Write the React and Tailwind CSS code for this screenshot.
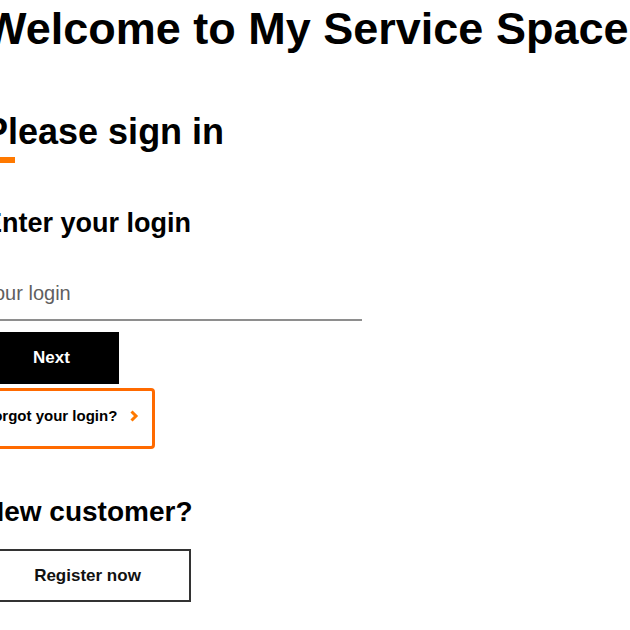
export default function App() {
  return (
    <div
      className="min-h-screen bg-white overflow-hidden text-black"
      style={{ fontFamily: '"Liberation Sans", Arial, sans-serif' }}
    >
      <div className="-ml-[16px] flex flex-col items-start">
        <h1 className="mt-[6px] text-[45px] leading-none font-bold whitespace-nowrap">
          Welcome to My Service Space
        </h1>

        <h2 className="mt-[63px] text-[36px] leading-none font-bold">
          Please sign in
        </h2>
        <div className="mt-[7px] h-[6px] w-[31px] bg-[#ff7900]" />

        <h3 className="mt-[47px] text-[27px] leading-none font-bold">
          Enter your login
        </h3>

        <input
          type="text"
          placeholder="your login"
          className="mt-[31px] h-[53px] w-[378px] border-b-2 border-[#8e8e8e] bg-transparent p-0 text-[20px] text-black outline-none placeholder:text-[#5f5f5f]"
        />

        <button className="mt-[11px] h-[52px] w-[135px] bg-black text-[17px] font-bold text-white">
          Next
        </button>

        <a
          href="#"
          className="-ml-[12px] mt-[4px] flex h-[61px] w-[183px] items-start rounded-[4px] border-[3px] border-[#ff6a00] pl-[9px] pt-[17px]"
        >
          <span className="text-[15px] leading-none font-bold text-black">
            Forgot your login?
          </span>
          <svg
            width="10"
            height="14"
            viewBox="0 0 10 14"
            className="ml-[12px] mt-[1px]"
          >
            <polyline
              points="2.5,2.5 7,7 2.5,11.5"
              fill="none"
              stroke="#ff7900"
              strokeWidth="3"
            />
          </svg>
        </a>

        <h3 className="mt-[49px] text-[28px] leading-none font-bold">
          New customer?
        </h3>

        <button className="mt-[23px] h-[53px] w-[207px] border-2 border-[#333] bg-white text-[17px] font-bold text-[#111]">
          Register now
        </button>
      </div>
    </div>
  );
}
